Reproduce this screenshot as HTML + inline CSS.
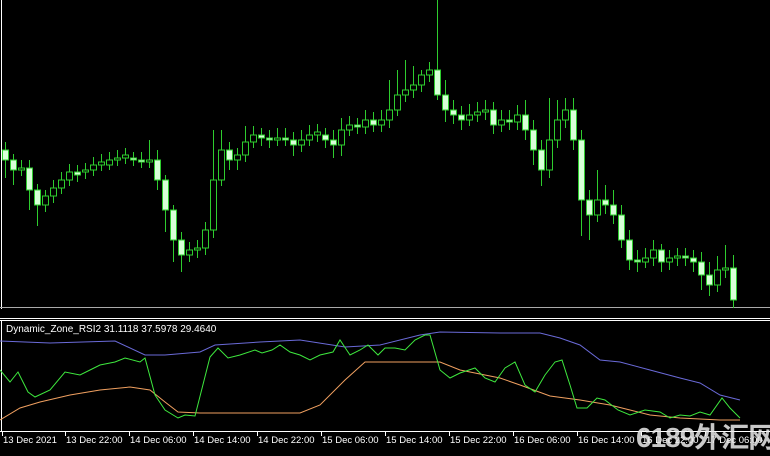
<!DOCTYPE html>
<html><head><meta charset="utf-8"><style>
body{margin:0;background:#000;width:770px;height:452px;overflow:hidden;position:relative;font-family:"Liberation Sans","Noto Sans CJK SC",sans-serif}
.lbl{position:absolute;top:435px;color:#fff;font-size:9.5px;white-space:nowrap}
.tick{position:absolute;top:432px;width:1px;height:4px;background:#fff}
</style></head><body>
<svg width="770" height="452" style="position:absolute;left:0;top:0" xmlns="http://www.w3.org/2000/svg">
<line x1="1.5" y1="0" x2="1.5" y2="309" stroke="#fff"/>
<line x1="0" y1="307.5" x2="770" y2="307.5" stroke="#aaa"/>
<line x1="0" y1="318.5" x2="770" y2="318.5" stroke="#fff"/>
<line x1="0" y1="320.5" x2="770" y2="320.5" stroke="#fff"/>
<line x1="1.5" y1="320" x2="1.5" y2="432" stroke="#fff"/>
<line x1="0" y1="431.5" x2="770" y2="431.5" stroke="#fff"/>
<path fill="none" stroke="#2ecc2e" d="M5.5 142V178M13.5 154V185M21.5 160V176M29.5 160V210M37.5 184V226M45.5 190V212M53.5 180V203M61.5 172V194M69.5 164V186M77.5 165V182M85.5 163V179M93.5 157V176M101.5 154V171M109.5 152V170M117.5 150V166M125.5 148V164M133.5 152V166M141.5 152V168M149.5 140V168M157.5 150V190M165.5 175V232M173.5 205V262M181.5 232V272M189.5 242V262M197.5 240V258M205.5 222V255M213.5 130V238M221.5 130V186M229.5 142V170M237.5 148V170M245.5 126V162M253.5 126V148M261.5 128V146M269.5 130V148M277.5 128V146M285.5 128V146M293.5 132V156M301.5 130V152M309.5 125V146M317.5 124V142M325.5 128V148M333.5 130V158M341.5 118V156M349.5 116V136M357.5 118V134M365.5 110V134M373.5 112V132M381.5 110V132M389.5 80V128M397.5 70V116M405.5 60V102M413.5 66V98M421.5 70V92M429.5 62V82M437.5 0V100M445.5 80V122M453.5 100V124M461.5 106V130M469.5 104V126M477.5 102V122M485.5 100V120M493.5 102V134M501.5 110V132M509.5 110V130M517.5 105V130M525.5 100V140M533.5 120V165M541.5 140V186M549.5 98V178M557.5 100V148M565.5 98V128M573.5 98V150M581.5 130V236M589.5 190V240M597.5 170V222M605.5 185V214M613.5 190V224M621.5 205V248M629.5 230V270M637.5 250V272M645.5 248V268M653.5 240V266M661.5 244V272M669.5 250V270M677.5 248V266M685.5 248V266M693.5 250V272M701.5 252V290M709.5 262V296M717.5 256V292M725.5 245V278M733.5 255V308"/>
<g fill="#d8ffd8" stroke="#2ecc2e">
<rect x="2.5" y="150" width="6" height="10"/><rect x="10.5" y="160" width="6" height="10"/><rect x="26.5" y="168" width="6" height="22"/><rect x="34.5" y="190" width="6" height="15"/><rect x="74.5" y="172" width="6" height="3"/><rect x="130.5" y="158" width="6" height="2"/><rect x="138.5" y="160" width="6" height="2"/><rect x="154.5" y="160" width="6" height="20"/><rect x="162.5" y="180" width="6" height="30"/><rect x="170.5" y="210" width="6" height="30"/><rect x="178.5" y="240" width="6" height="15"/><rect x="226.5" y="150" width="6" height="10"/><rect x="258.5" y="135" width="6" height="3"/><rect x="266.5" y="138" width="6" height="2"/><rect x="282.5" y="138" width="6" height="2"/><rect x="290.5" y="140" width="6" height="5"/><rect x="322.5" y="135" width="6" height="5"/><rect x="330.5" y="140" width="6" height="5"/><rect x="354.5" y="125" width="6" height="2"/><rect x="370.5" y="120" width="6" height="5"/><rect x="434.5" y="70" width="6" height="25"/><rect x="442.5" y="95" width="6" height="15"/><rect x="450.5" y="110" width="6" height="5"/><rect x="458.5" y="115" width="6" height="5"/><rect x="490.5" y="110" width="6" height="15"/><rect x="506.5" y="120" width="6" height="2"/><rect x="522.5" y="115" width="6" height="15"/><rect x="530.5" y="130" width="6" height="20"/><rect x="538.5" y="150" width="6" height="20"/><rect x="570.5" y="110" width="6" height="30"/><rect x="578.5" y="140" width="6" height="60"/><rect x="586.5" y="200" width="6" height="15"/><rect x="602.5" y="200" width="6" height="5"/><rect x="610.5" y="205" width="6" height="10"/><rect x="618.5" y="215" width="6" height="25"/><rect x="626.5" y="240" width="6" height="20"/><rect x="634.5" y="260" width="6" height="2"/><rect x="658.5" y="250" width="6" height="12"/><rect x="682.5" y="256" width="6" height="2"/><rect x="690.5" y="258" width="6" height="4"/><rect x="698.5" y="262" width="6" height="13"/><rect x="706.5" y="275" width="6" height="10"/><rect x="730.5" y="268" width="6" height="32"/>
</g>
<g fill="#000" stroke="#2ecc2e">
<rect x="18.5" y="168" width="6" height="2"/><rect x="42.5" y="196" width="6" height="9"/><rect x="50.5" y="188" width="6" height="8"/><rect x="58.5" y="180" width="6" height="8"/><rect x="66.5" y="172" width="6" height="8"/><rect x="82.5" y="170" width="6" height="2"/><rect x="90.5" y="165" width="6" height="5"/><rect x="98.5" y="162" width="6" height="3"/><rect x="106.5" y="160" width="6" height="5"/><rect x="114.5" y="158" width="6" height="2"/><rect x="122.5" y="155" width="6" height="3"/><rect x="146.5" y="160" width="6" height="2"/><rect x="186.5" y="250" width="6" height="5"/><rect x="194.5" y="248" width="6" height="2"/><rect x="202.5" y="230" width="6" height="18"/><rect x="210.5" y="180" width="6" height="50"/><rect x="218.5" y="150" width="6" height="30"/><rect x="234.5" y="155" width="6" height="5"/><rect x="242.5" y="142" width="6" height="13"/><rect x="250.5" y="135" width="6" height="7"/><rect x="274.5" y="138" width="6" height="2"/><rect x="298.5" y="140" width="6" height="5"/><rect x="306.5" y="135" width="6" height="5"/><rect x="314.5" y="132" width="6" height="3"/><rect x="338.5" y="130" width="6" height="15"/><rect x="346.5" y="125" width="6" height="5"/><rect x="362.5" y="120" width="6" height="7"/><rect x="378.5" y="120" width="6" height="5"/><rect x="386.5" y="110" width="6" height="10"/><rect x="394.5" y="95" width="6" height="15"/><rect x="402.5" y="90" width="6" height="5"/><rect x="410.5" y="85" width="6" height="5"/><rect x="418.5" y="75" width="6" height="10"/><rect x="426.5" y="70" width="6" height="5"/><rect x="466.5" y="115" width="6" height="5"/><rect x="474.5" y="112" width="6" height="3"/><rect x="482.5" y="110" width="6" height="2"/><rect x="498.5" y="120" width="6" height="5"/><rect x="514.5" y="115" width="6" height="7"/><rect x="546.5" y="140" width="6" height="30"/><rect x="554.5" y="120" width="6" height="20"/><rect x="562.5" y="110" width="6" height="10"/><rect x="594.5" y="200" width="6" height="15"/><rect x="642.5" y="258" width="6" height="4"/><rect x="650.5" y="250" width="6" height="8"/><rect x="666.5" y="258" width="6" height="4"/><rect x="674.5" y="256" width="6" height="2"/><rect x="714.5" y="270" width="6" height="15"/><rect x="722.5" y="268" width="6" height="2"/>
</g>
<polyline fill="none" stroke="#6a6ad8" points="0,341 50,343 115,341 145,355 165,355 200,352 215,345 260,342 300,340 345,347 380,345 420,335 440,332 500,333 540,333 560,338 580,345 600,360 620,362 650,370 680,378 700,383 720,395 740,400"/>
<polyline fill="none" stroke="#f0a060" points="0,420 20,408 40,402 70,395 100,390 130,387 150,390 165,402 178,412 200,413 300,413 320,405 345,380 365,362 400,362 440,362 460,370 500,378 520,385 550,396 580,400 610,405 630,410 650,415 680,418 720,420 740,420"/>
<polyline fill="none" stroke="#3ee83e" points="0,370 10,382 18,372 28,392 35,397 50,390 65,372 80,375 90,370 100,365 115,362 125,358 140,362 145,358 155,395 165,410 178,418 185,415 195,416 210,357 218,348 228,358 240,355 255,350 262,353 272,350 280,345 290,352 300,355 310,360 320,355 333,352 340,340 350,355 360,350 368,345 378,355 385,348 395,348 405,350 415,340 425,335 430,335 440,370 450,378 460,373 475,368 485,378 495,382 505,368 515,362 525,385 535,392 545,375 555,362 562,360 570,385 577,408 587,408 597,398 605,400 618,410 630,415 645,410 660,412 670,418 680,415 690,416 700,412 710,415 722,398 730,408 740,418"/>
</svg>
<div style="position:absolute;left:6px;top:324px;color:#fff;font-size:10px;white-space:nowrap">Dynamic_Zone_RSI2 31.1118 37.5978 29.4640</div>
<div class="tick" style="left:2px"></div><div class="lbl" style="left:3px">13 Dec 2021</div>
<div class="tick" style="left:65px"></div><div class="lbl" style="left:66px">13 Dec 22:00</div>
<div class="tick" style="left:129px"></div><div class="lbl" style="left:130px">14 Dec 06:00</div>
<div class="tick" style="left:193px"></div><div class="lbl" style="left:194px">14 Dec 14:00</div>
<div class="tick" style="left:257px"></div><div class="lbl" style="left:258px">14 Dec 22:00</div>
<div class="tick" style="left:321px"></div><div class="lbl" style="left:322px">15 Dec 06:00</div>
<div class="tick" style="left:385px"></div><div class="lbl" style="left:386px">15 Dec 14:00</div>
<div class="tick" style="left:449px"></div><div class="lbl" style="left:450px">15 Dec 22:00</div>
<div class="tick" style="left:513px"></div><div class="lbl" style="left:514px">16 Dec 06:00</div>
<div class="tick" style="left:577px"></div><div class="lbl" style="left:578px">16 Dec 14:00</div>
<div class="tick" style="left:641px"></div><div class="lbl" style="left:642px">16 Dec 22:00</div>
<div class="tick" style="left:705px"></div><div class="lbl" style="left:706px">17 Dec 06:00</div>
<div style="position:absolute;left:636px;top:416px;color:rgba(235,235,235,0.85);font-size:28px;font-weight:bold;letter-spacing:-1px;white-space:nowrap">6189外汇网</div>
</body></html>
